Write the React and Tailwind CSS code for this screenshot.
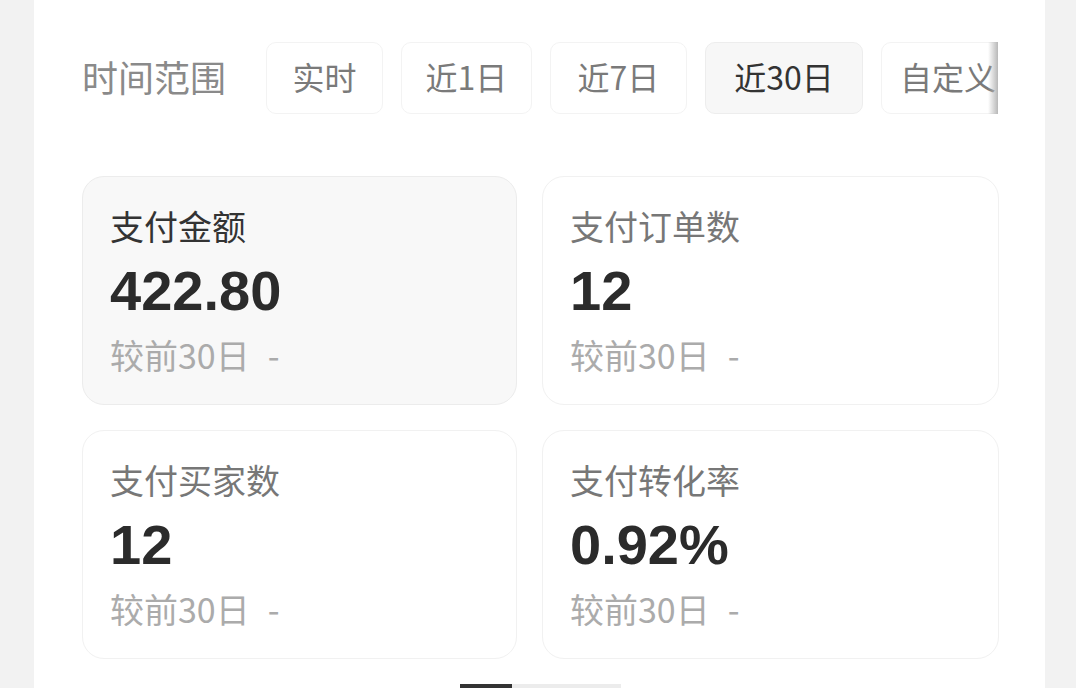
import React from 'react';

const tabs = [
  { label: '实时', w: 'w-[117px]' },
  { label: '近1日', w: 'w-[131px]' },
  { label: '近7日', w: 'w-[137px]' },
  { label: '近30日', w: 'w-[158px]' },
  { label: '自定义', w: 'w-[134px]' },
];
const cards = [
  { title: '支付金额', value: '422.80', active: true },
  { title: '支付订单数', value: '12' },
  { title: '支付买家数', value: '12' },
  { title: '支付转化率', value: '0.92%' },
];

const cjk = { fontFamily: '"Noto Sans CJK SC", "Noto Sans", sans-serif' };
const num = { fontFamily: '"Liberation Sans", Arial, sans-serif' };

const App = () => {
  return (
    <div className="w-[1076px] h-[688px] overflow-hidden bg-[#f2f2f2]" style={cjk}>
      <div className="ml-[34px] w-[1011px] h-full bg-white pl-[48px] pr-[47px] pt-[42px]">
        {/* Time range */}
        <div className="flex items-center h-[72px]">
          <span className="text-[36px] text-[#8a8a8a] w-[146px] whitespace-nowrap pb-[5px]">时间范围</span>
          <div className="relative ml-[38px] flex-1 overflow-hidden">
            <div className="flex gap-[18px]">
              {tabs.map((t) => (
                <div
                  key={t.label}
                  className={
                    'shrink-0 h-[72px] pb-[5px] flex items-center justify-center rounded-[10px] border text-[32px] whitespace-nowrap ' +
                    t.w +
                    ' ' +
                    (t.label === '近30日'
                      ? 'bg-[#f7f7f7] border-[#ededed] text-[#333]'
                      : 'bg-white border-[#f3f3f3] text-[#7a7a7a]')
                  }
                >
                  {t.label}
                </div>
              ))}
            </div>
            <div className="absolute right-0 top-0 h-[74px] w-[10px] bg-gradient-to-l from-[#b8b8b8] to-transparent"></div>
          </div>
        </div>

        {/* Cards */}
        <div className="mt-[62px] grid grid-cols-[435px_457px] gap-[25px]">
          {cards.map((c) => (
            <div
              key={c.title}
              className={
                'h-[229px] rounded-[22px] border pl-[27px] pt-[27px] ' +
                (c.active ? 'bg-[#f8f8f8] border-[#ececec]' : 'bg-white border-[#f1f1f1]')
              }
            >
              <div className={'h-[44px] leading-[44px] text-[34px] ' + (c.active ? 'text-[#333]' : 'text-[#777]')}>
                {c.title}
              </div>
              <div className="mt-[11px] h-[64px] leading-[64px] text-[56px] font-bold text-[#2b2b2b]" style={num}>
                {c.value}
              </div>
              <div className="mt-[10px] h-[44px] leading-[44px] text-[34px] text-[#ababab] whitespace-nowrap">
                较前30日<span className="ml-[18px]">-</span>
              </div>
            </div>
          ))}
        </div>

        {/* Scroll indicator */}
        <div className="mt-[25px] flex justify-center">
          <div className="flex h-[6px] w-[161px]">
            <div className="w-[52px] bg-[#333]"></div>
            <div className="flex-1 bg-[#ececec]"></div>
          </div>
        </div>
      </div>
    </div>
  );
};

export default App;
